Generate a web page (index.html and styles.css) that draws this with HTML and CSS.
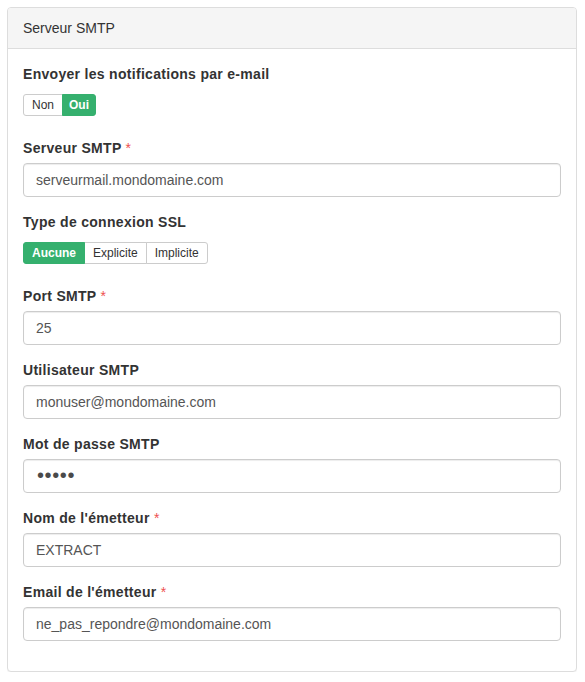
FILE: index.html
```html
<!DOCTYPE html>
<html lang="fr">
<head>
<meta charset="utf-8">
<title>Serveur SMTP</title>
<link rel="stylesheet" href="styles.css">
</head>
<body>
<div class="panel">
  <div class="panel-heading">Serveur SMTP</div>
  <div class="panel-body">
    <div class="form-group">
      <label class="label">Envoyer les notifications par e-mail</label>
      <div class="toggle-wrap">
        <div class="btn-group">
          <span class="btn">Non</span><span class="btn active narrow">Oui</span>
        </div>
      </div>
    </div>
    <div class="form-group">
      <label class="label">Serveur SMTP <span class="req">*</span></label>
      <input class="input" type="text" value="serveurmail.mondomaine.com">
    </div>
    <div class="form-group">
      <label class="label">Type de connexion SSL</label>
      <div class="toggle-wrap">
        <div class="btn-group">
          <span class="btn active">Aucune</span><span class="btn">Explicite</span><span class="btn">Implicite</span>
        </div>
      </div>
    </div>
    <div class="form-group">
      <label class="label">Port SMTP <span class="req">*</span></label>
      <input class="input" type="text" value="25">
    </div>
    <div class="form-group">
      <label class="label">Utilisateur SMTP</label>
      <input class="input" type="text" value="monuser@mondomaine.com">
    </div>
    <div class="form-group">
      <label class="label">Mot de passe SMTP</label>
      <input class="input password" type="password" value="12345">
    </div>
    <div class="form-group">
      <label class="label">Nom de l'émetteur <span class="req">*</span></label>
      <input class="input" type="text" value="EXTRACT">
    </div>
    <div class="form-group">
      <label class="label">Email de l'émetteur <span class="req">*</span></label>
      <input class="input" type="text" value="ne_pas_repondre@mondomaine.com">
    </div>
  </div>
</div>
</body>
</html>
```
FILE: styles.css
```css
* { box-sizing: border-box; }
html, body { background: #fff; }
body {
  margin: 7px 8px 7px 7px;
  font-family: "Liberation Sans", Arial, sans-serif;
  font-size: 14px;
  line-height: 20px;
  color: #333;
}
.panel {
  border: 1px solid #ddd;
  border-radius: 4px;
  background: #fff;
  box-shadow: 0 1px 1px rgba(0,0,0,0.05);
}
.panel-heading {
  background: #f5f5f5;
  border-bottom: 1px solid #ddd;
  border-radius: 3px 3px 0 0;
  padding: 10px 15px;
  color: #333;
}
.panel-body {
  padding: 15px;
}
.form-group {
  margin-bottom: 15px;
}
.label {
  display: block;
  font-weight: bold;
  margin-bottom: 5px;
  line-height: 20px;
  letter-spacing: 0.3px;
}
.req {
  color: #ee5050;
  font-weight: normal;
  letter-spacing: 0;
}
.toggle-wrap {
  padding: 5px 0 7px;
}
.btn-group {
  display: inline-flex;
  height: 22px;
}
.btn {
  display: block;
  font-size: 12px;
  line-height: 20px;
  height: 22px;
  padding: 0 8px;
  border: 1px solid #ccc;
  background: #fff;
  color: #333;
  margin-left: -1px;
}
.btn:first-child {
  margin-left: 0;
  border-radius: 3px 0 0 3px;
}
.btn:last-child {
  border-radius: 0 3px 3px 0;
}
.btn.narrow {
  padding: 0 6px;
}
.btn.active {
  background: #35b06e;
  border-color: #35b06e;
  color: #fff;
  font-weight: bold;
  position: relative;
}
.input {
  display: block;
  width: 100%;
  height: 34px;
  padding: 6px 12px;
  font-family: "Liberation Sans", Arial, sans-serif;
  font-size: 14px;
  line-height: 20px;
  color: #555;
  background: #fff;
  border: 1px solid #ccc;
  border-radius: 4px;
  box-shadow: inset 0 1px 1px rgba(0,0,0,0.075);
  outline: none;
}
.input.password {
  font-size: 20px;
  letter-spacing: 0.6px;
  padding: 0 12px 2px 13px;
  color: #4a4a4a;
}
```
